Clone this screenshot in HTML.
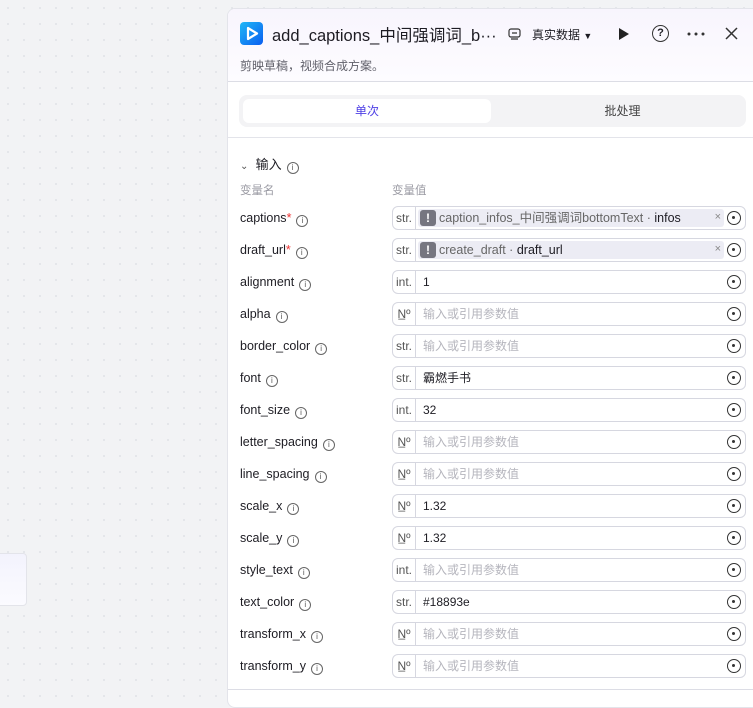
<!DOCTYPE html>
<html><head><meta charset="utf-8"><style>
*{box-sizing:border-box;margin:0;padding:0}
body{width:753px;height:695px;overflow:hidden;background:#f2f3f5;background-image:radial-gradient(#dfe1e6 1px,transparent 1px);background-size:16px 16px;font-family:"Liberation Sans","Noto Sans CJK SC",sans-serif;position:relative;color:#1d1c23}
.card{position:absolute;left:-10px;top:553px;width:37px;height:53px;background:linear-gradient(#f3f3fd,#fbfbff);border:1px solid #e3e4ea;border-radius:4px}
.panel{position:absolute;left:227px;top:8px;width:540px;height:700px;background:#fff;border:1px solid #e3e4ea;border-radius:8px;overflow:hidden}
.hdr{height:73px;background:linear-gradient(#f8f5fd,#fdfcff);border-bottom:1px solid #dcdde5;position:relative}
.logo{position:absolute;left:12px;top:13px;width:23px;height:23px;border-radius:4px;background:linear-gradient(135deg,#20b8f6,#0a5ef0)}
.title{position:absolute;left:44px;top:13px;font-size:16.5px;color:#1d1c23;white-space:nowrap}
.sub{position:absolute;left:12px;top:48px;font-size:12px;color:#60606a}
.ic{position:absolute;top:15px;font-size:13px}
.tabs{position:absolute;left:11px;top:86px;width:507px;height:32px;background:#f3f3f5;border-radius:8px}
.tab1{position:absolute;left:4px;top:4px;width:248px;height:24px;background:#fff;border-radius:6px;color:#4e40e5;font-size:12px;text-align:center;line-height:24px}
.tab2{position:absolute;left:260px;top:4px;width:247px;height:24px;color:#444;font-size:12px;text-align:center;line-height:24px}
.div2{position:absolute;left:0;top:128px;width:100%;border-top:1px solid #e3e4ea}
.sec{position:absolute;left:12px;top:145px;font-size:13px}
.lbl{position:absolute;font-size:11.5px;color:#9a9aa3;top:173px}
.row{position:absolute;left:0;width:540px;height:24px}
.name{position:absolute;left:12px;top:5px;font-size:12.5px}
.info{display:inline-block;width:12px;height:12px;border:1px solid #666;border-radius:50%;font-size:8px;text-align:center;line-height:10px;vertical-align:-1px;margin-left:5px;color:#555}
.inp{position:absolute;left:164px;top:0;width:354px;height:24px;border:1px solid #d6d7e0;border-radius:6px}
.t{position:absolute;left:0;top:0;width:23px;height:22px;border-right:1px solid #d6d7e0;font-size:12px;color:#555;text-align:center;line-height:22px}
.v{position:absolute;left:30px;top:4px;font-size:12px}
.ph{color:#b5b5bd;top:2px}
.tg{position:absolute;left:25px;top:2px;width:306px;height:18px;background:#ececf4;border-radius:3px;font-size:12.5px;color:#666;line-height:18px;padding-left:21px}
.tg i{position:absolute;left:2px;top:1px;width:16px;height:16px;background:#767680;border-radius:3px;color:#fff;font-style:normal;text-align:center;font-weight:bold;line-height:16px;font-size:12px}
.x{position:absolute;right:24px;top:4px;font-size:11px;color:#888}
.o{position:absolute;right:4px;top:4px;width:14px;height:14px;border:1.5px solid #333;border-radius:50%}
.o:after{content:"";position:absolute;left:4px;top:4px;width:3px;height:3px;background:#333;border-radius:50%}
.bot{position:absolute;left:0;top:680px;width:100%;border-top:1px solid #dcdde5}
</style></head><body>
<div class="card"></div>
<div class="panel">
<div class="hdr">
<div class="logo"><svg width="23" height="23"><path d="M8 6 L17 11.5 L8 17 Z" fill="none" stroke="#fff" stroke-width="2.2" stroke-linejoin="round"/></svg></div>
<div class="title">add_captions_中间强调词_b···</div>
<svg class="ic" style="left:280px;top:19px" width="13" height="12"><rect x="1" y="1" width="11" height="8" rx="2" fill="none" stroke="#333" stroke-width="1.2"/><path d="M3 11h7M4 5h5" stroke="#333" stroke-width="1.2"/></svg>
<div class="ic" style="left:304px;top:17px;font-size:12px">真实数据 <span style="font-size:9px">▼</span></div>
<svg class="ic" style="left:390px;top:18px" width="12" height="14"><path d="M1 1L11 7L1 13Z" fill="#222"/></svg>
<div class="ic" style="left:424px;top:16px;width:17px;height:17px;border:1.5px solid #333;border-radius:50%;font-size:11px;text-align:center;line-height:14px;font-weight:bold">?</div>
<svg class="ic" style="left:459px;top:23px" width="18" height="4"><circle cx="2" cy="2" r="1.5" fill="#333"/><circle cx="9" cy="2" r="1.5" fill="#333"/><circle cx="16" cy="2" r="1.5" fill="#333"/></svg>
<svg class="ic" style="left:497px;top:18px" width="13" height="13"><path d="M1 1L12 12M12 1L1 12" stroke="#333" stroke-width="1.5"/></svg>
<div class="sub">剪映草稿，视频合成方案。</div>
</div>
<div class="tabs"><div class="tab1">单次</div><div class="tab2">批处理</div></div>
<div class="div2"></div>
<div class="sec"><span style="font-size:10px;color:#555">⌄</span>&nbsp;&nbsp;输入<span class="info">i</span></div>
<div class="lbl" style="left:12px">变量名</div><div class="lbl" style="left:164px">变量值</div>

<div class="row" style="top:197px"><div class="name">captions<span style="color:#e33">*</span><span class="info">i</span></div><div class="inp"><div class="t">str.</div><div class="tg"><i>!</i>caption_infos_中间强调词bottomText · <b style="color:#1d1c23;font-weight:normal">infos</b></div><span class="x">×</span><span class="o"></span></div></div>
<div class="row" style="top:229px"><div class="name">draft_url<span style="color:#e33">*</span><span class="info">i</span></div><div class="inp"><div class="t">str.</div><div class="tg"><i>!</i>create_draft · <b style="color:#1d1c23;font-weight:normal">draft_url</b></div><span class="x">×</span><span class="o"></span></div></div>
<div class="row" style="top:261px"><div class="name">alignment<span class="info">i</span></div><div class="inp"><div class="t">int.</div><div class="v">1</div><span class="o"></span></div></div>
<div class="row" style="top:293px"><div class="name">alpha<span class="info">i</span></div><div class="inp"><div class="t">N̲º</div><div class="v ph">输入或引用参数值</div><span class="o"></span></div></div>
<div class="row" style="top:325px"><div class="name">border_color<span class="info">i</span></div><div class="inp"><div class="t">str.</div><div class="v ph">输入或引用参数值</div><span class="o"></span></div></div>
<div class="row" style="top:357px"><div class="name">font<span class="info">i</span></div><div class="inp"><div class="t">str.</div><div class="v" style="top:2px">霸燃手书</div><span class="o"></span></div></div>
<div class="row" style="top:389px"><div class="name">font_size<span class="info">i</span></div><div class="inp"><div class="t">int.</div><div class="v">32</div><span class="o"></span></div></div>
<div class="row" style="top:421px"><div class="name">letter_spacing<span class="info">i</span></div><div class="inp"><div class="t">N̲º</div><div class="v ph">输入或引用参数值</div><span class="o"></span></div></div>
<div class="row" style="top:453px"><div class="name">line_spacing<span class="info">i</span></div><div class="inp"><div class="t">N̲º</div><div class="v ph">输入或引用参数值</div><span class="o"></span></div></div>
<div class="row" style="top:485px"><div class="name">scale_x<span class="info">i</span></div><div class="inp"><div class="t">N̲º</div><div class="v">1.32</div><span class="o"></span></div></div>
<div class="row" style="top:517px"><div class="name">scale_y<span class="info">i</span></div><div class="inp"><div class="t">N̲º</div><div class="v">1.32</div><span class="o"></span></div></div>
<div class="row" style="top:549px"><div class="name">style_text<span class="info">i</span></div><div class="inp"><div class="t">int.</div><div class="v ph">输入或引用参数值</div><span class="o"></span></div></div>
<div class="row" style="top:581px"><div class="name">text_color<span class="info">i</span></div><div class="inp"><div class="t">str.</div><div class="v">#18893e</div><span class="o"></span></div></div>
<div class="row" style="top:613px"><div class="name">transform_x<span class="info">i</span></div><div class="inp"><div class="t">N̲º</div><div class="v ph">输入或引用参数值</div><span class="o"></span></div></div>
<div class="row" style="top:645px"><div class="name">transform_y<span class="info">i</span></div><div class="inp"><div class="t">N̲º</div><div class="v ph">输入或引用参数值</div><span class="o"></span></div></div>
<div class="bot"></div>
</div>
</body></html>
